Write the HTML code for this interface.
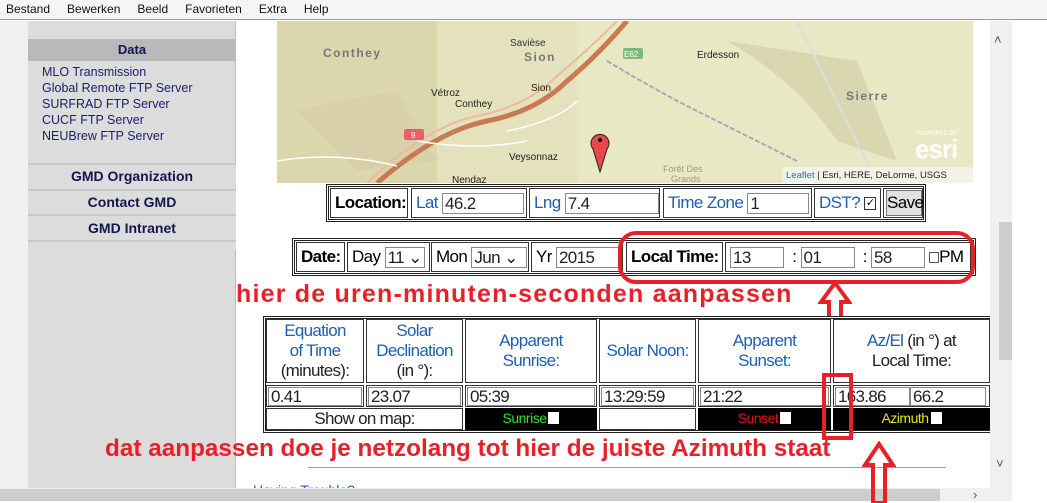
<!DOCTYPE html>
<html><head><meta charset="utf-8"><style>
*{margin:0;padding:0;box-sizing:border-box}
body{width:1047px;height:501px;overflow:hidden;background:#fff;font-family:"Liberation Sans",Arial,sans-serif;position:relative}
.a{position:absolute}
.menu span{margin-right:17px}
.side a{display:block;color:#1c1c6e;font-size:12.5px;line-height:16px}
.btn{position:absolute;left:28px;width:208px;background:#dcdcdc;border-top:2px solid #c8c8c8;text-align:center;font-weight:bold;font-size:14px;color:#141450}
.box{position:absolute;border:3px double #222;background:#fff}
.c{position:absolute;border:1px solid #333;font-size:17px;letter-spacing:-0.6px;white-space:nowrap;display:flex;align-items:center;padding-left:4px}
.in{display:inline-block;border:1px solid #888;height:21px;background:#fff;padding-left:2px;line-height:20px;color:#222}
.blue{color:#1f5fb0}
.red{color:#e8202a;font-weight:bold;font-size:25px;white-space:nowrap}
.th{position:absolute;border:1px solid #333;font-size:17px;letter-spacing:-0.7px;line-height:20px;color:#1f5fb0;display:flex;align-items:center;justify-content:center}
.th div{text-align:center}
.td{position:absolute;border:1px solid #333;font-size:17px;letter-spacing:-0.7px}
.blk{position:absolute;background:#000;font-size:14px;text-align:center;line-height:21px;letter-spacing:-0.5px}
.cb{display:inline-block;width:11px;height:12px;background:#fff;vertical-align:-1px;margin-left:2px}
.k{color:#222}
</style></head><body>
<div class="a menu" style="left:0;top:0;width:1047px;height:20px;background:#f5f5f5;border-bottom:1px solid #9a9a9a;font-size:12px;line-height:19px;padding-left:6px;color:#111"><span>Bestand</span><span>Bewerken</span><span>Beeld</span><span>Favorieten</span><span>Extra</span><span>Help</span></div>
<div class="a" style="left:0;top:21px;width:28px;height:467px;background:#f0f0f0"></div>
<div class="a" style="left:28px;top:21px;width:208px;height:467px;background:#dcdcdc;border-right:1px solid #bbb"></div>
<div class="a" style="left:28px;top:39px;width:208px;height:22px;background:#b9b9b9;text-align:center;font-weight:bold;font-size:13px;line-height:21px;color:#141450">Data</div>
<div class="a side" style="left:42px;top:64px"><a>MLO Transmission</a><a>Global Remote FTP Server</a><a>SURFRAD FTP Server</a><a>CUCF FTP Server</a><a>NEUBrew FTP Server</a></div>
<div class="btn" style="top:163px;height:25px;line-height:23px">GMD Organization</div>
<div class="btn" style="top:189px;height:25px;line-height:23px">Contact GMD</div>
<div class="btn" style="top:214px;height:26px;line-height:25px">GMD Intranet</div>
<div class="btn" style="top:240px;height:10px"></div>
<svg class="a" style="left:277px;top:21px" width="696" height="162" viewBox="0 0 696 162">
<rect width="696" height="162" fill="#e4e2bc"/>
<rect x="0" y="0" width="160" height="162" fill="#dcd6ad"/>
<rect x="300" y="0" width="396" height="162" fill="#e8e9c4"/>
<path d="M20 90 Q60 80 120 70 L160 140 L80 150 Z" fill="#d7d0a8"/>
<path d="M450 20 Q520 60 560 120 L620 140 L580 40Z" fill="#d8d7b0"/>
<path d="M520 0 Q560 80 600 162" stroke="#ddd" stroke-width="2" fill="none"/>
<path d="M330 40 Q380 70 420 90 T520 140" stroke="#a9a9b5" stroke-width="2" stroke-dasharray="5 2" fill="none"/>
<path d="M100 162 Q160 110 210 100 Q260 90 290 60 Q320 35 350 0" stroke="#c97a55" stroke-width="5" fill="none"/>
<path d="M90 162 Q150 105 200 95 Q250 85 280 55 Q310 30 340 0" stroke="#f0b7a0" stroke-width="2" fill="none"/>
<path d="M0 140 Q60 130 120 145 M140 120 Q200 130 250 120 M230 110 Q280 100 300 80" stroke="#fff" stroke-width="1.5" fill="none"/>
<text x="46" y="36" font-size="12" fill="#777" font-weight="bold" letter-spacing="1.5" font-family="Liberation Sans">Conthey</text>
<text x="233" y="25" font-size="10" fill="#333" font-family="Liberation Sans">Savièse</text>
<text x="247" y="40" font-size="12" fill="#777" font-weight="bold" letter-spacing="1.5" font-family="Liberation Sans">Sion</text>
<text x="254" y="70" font-size="10" fill="#222" font-family="Liberation Sans">Sion</text>
<text x="154" y="75" font-size="10" fill="#222" font-family="Liberation Sans">Vétroz</text>
<text x="178" y="86" font-size="10" fill="#222" font-family="Liberation Sans">Conthey</text>
<text x="232" y="139" font-size="10" fill="#222" font-family="Liberation Sans">Veysonnaz</text>
<text x="420" y="37" font-size="10" fill="#222" font-family="Liberation Sans">Erdesson</text>
<text x="569" y="79" font-size="12" fill="#777" font-weight="bold" letter-spacing="1.5" font-family="Liberation Sans">Sierre</text>
<text x="175" y="162" font-size="10" fill="#222" font-family="Liberation Sans">Nendaz</text>
<text x="386" y="151" font-size="9" fill="#9a9a7a" font-family="Liberation Sans">Forêt Des</text>
<text x="394" y="161" font-size="9" fill="#9a9a7a" font-family="Liberation Sans">Grands</text>
<rect x="127" y="108" width="20" height="11" rx="2" fill="#e8606a"/><text x="134" y="117" font-size="8" fill="#fff" font-family="Liberation Sans">9</text>
<rect x="346" y="27" width="20" height="11" rx="2" fill="#7bbb78"/><text x="347" y="36" font-size="8" fill="#fff" font-family="Liberation Sans">E62</text>
<path d="M323 151 L316 128 A9 9 0 1 1 330 128 Z" fill="#e8484a" stroke="#222" stroke-width="1"/>
<circle cx="323" cy="119" r="2" fill="#000"/>
<text x="640" y="114" font-size="6" fill="#fff" font-family="Liberation Sans">POWERED BY</text>
<text x="638" y="137" font-size="26" fill="#fff" font-weight="bold" font-family="Liberation Sans" letter-spacing="-1">esri</text>
<rect x="505" y="146" width="191" height="16" fill="#f2f2ea"/>
<text x="509" y="157" font-size="9.5" fill="#222" font-family="Liberation Sans"><tspan fill="#1a73b8">Leaflet</tspan> | Esri, HERE, DeLorme, USGS</text>
</svg>
<div class="box" style="left:326px;top:184px;width:600px;height:38px"></div>
<div class="c" style="left:330px;top:188px;width:78px;height:30px;font-weight:bold">Location:</div>
<div class="c" style="left:411px;top:188px;width:116px;height:30px"><span class="blue">Lat</span>&nbsp;<span class="in" style="width:82px">46.2</span></div>
<div class="c" style="left:529px;top:188px;width:131px;height:30px"><span class="blue">Lng</span>&nbsp;<span class="in" style="width:97px">7.4</span></div>
<div class="c" style="left:663px;top:188px;width:149px;height:30px"><span class="blue">Time Zone</span>&nbsp;<span class="in" style="width:62px">1</span></div>
<div class="c" style="left:814px;top:188px;width:67px;height:30px"><span class="blue">DST?</span>&nbsp;<span style="border:1px solid #333;width:12px;height:13px;font-size:11px;line-height:11px;text-align:center">✓</span></div>
<div class="c" style="left:883px;top:188px;width:40px;height:30px;padding-left:2px"><span style="background:#e1e1e1;border:1px solid #777;height:26px;width:36px;line-height:24px;text-align:center">Save</span></div>
<div class="box" style="left:292px;top:238px;width:684px;height:38px"></div>
<div class="c" style="left:296px;top:242px;width:49px;height:30px;font-weight:bold">Date:</div>
<div class="c" style="left:347px;top:242px;width:83px;height:30px">Day&nbsp;<span class="in" style="width:40px">11 ⌄</span></div>
<div class="c" style="left:431px;top:242px;width:98px;height:30px">Mon&nbsp;<span class="in" style="width:56px">Jun ⌄</span></div>
<div class="c" style="left:531px;top:242px;width:92px;height:30px">Yr&nbsp;<span class="in" style="width:64px">2015</span></div>
<div class="c" style="left:626px;top:242px;width:97px;height:30px;font-weight:bold">Local Time:</div>
<div class="c" style="left:725px;top:242px;width:246px;height:30px"><span class="in" style="width:54px">13</span>&nbsp;&nbsp;:&nbsp;<span class="in" style="width:54px">01</span>&nbsp;&nbsp;:&nbsp;<span class="in" style="width:54px">58</span>&nbsp;<span style="border:1px solid #555;width:10px;height:11px;display:inline-block"></span>PM</div>
<div class="a" style="left:618px;top:231px;width:357px;height:53px;border:4px solid #e8202a;border-radius:18px"></div>
<div class="a red" style="left:236px;top:280px;letter-spacing:1.2px">hier de uren-minuten-seconden aanpassen</div>
<svg class="a" style="left:818px;top:280px" width="34" height="52"><path d="M17 3 L31 22 L23 22 L23 49 L11 49 L11 22 L3 22 Z" fill="none" stroke="#e8202a" stroke-width="4"/></svg>
<div class="box" style="left:263px;top:316px;width:730px;height:117px"></div>
<div class="th" style="left:266px;top:319px;width:98px;height:64px"><div>Equation<br>of Time<br><span class="k">(minutes):</span></div></div>
<div class="th" style="left:366px;top:319px;width:97px;height:64px"><div>Solar<br>Declination<br><span class="k">(in °):</span></div></div>
<div class="th" style="left:465px;top:319px;width:132px;height:64px"><div>Apparent<br>Sunrise:</div></div>
<div class="th" style="left:599px;top:319px;width:97px;height:64px"><div>Solar Noon:</div></div>
<div class="th" style="left:698px;top:319px;width:133px;height:64px"><div>Apparent<br>Sunset:</div></div>
<div class="th" style="left:833px;top:319px;width:157px;height:64px"><div>Az/El <span class="k">(in °) at<br>Local Time:</span></div></div>
<div class="td" style="left:266px;top:385px;width:98px;height:22px"><span class="in" style="width:94px;margin:1px 0 0 1px;height:19px;line-height:18px">0.41</span></div>
<div class="td" style="left:366px;top:385px;width:97px;height:22px"><span class="in" style="width:93px;margin:1px 0 0 1px;height:19px;line-height:18px">23.07</span></div>
<div class="td" style="left:465px;top:385px;width:132px;height:22px"><span class="in" style="width:128px;margin:1px 0 0 1px;height:19px;line-height:18px">05:39</span></div>
<div class="td" style="left:599px;top:385px;width:97px;height:22px"><span class="in" style="width:93px;margin:1px 0 0 1px;height:19px;line-height:18px">13:29:59</span></div>
<div class="td" style="left:698px;top:385px;width:133px;height:22px"><span class="in" style="width:129px;margin:1px 0 0 1px;height:19px;line-height:18px">21:22</span></div>
<div class="td" style="left:833px;top:385px;width:157px;height:22px"><span class="in" style="width:75px;margin:1px 0 0 1px;height:19px;line-height:18px">163.86</span><span class="in" style="width:76px;height:19px;line-height:18px">66.2</span></div>
<div class="td" style="left:266px;top:408px;width:197px;height:22px;text-align:center;line-height:20px;color:#222">Show on map:</div>
<div class="blk" style="left:465px;top:408px;width:132px;height:22px;color:#2ee62e">Sunrise<span class="cb"></span></div>
<div class="td" style="left:599px;top:408px;width:97px;height:22px"></div>
<div class="blk" style="left:698px;top:408px;width:133px;height:22px;color:#f01010">Sunset<span class="cb"></span></div>
<div class="blk" style="left:833px;top:408px;width:157px;height:22px;color:#e8e810">Azimuth<span class="cb"></span></div>
<div class="a" style="left:822px;top:373px;width:31px;height:67px;border:4px solid #e8202a"></div>
<div class="a red" style="left:105px;top:435px;font-size:24.3px">dat aanpassen doe je netzolang tot hier de juiste Azimuth staat</div>
<div class="a" style="left:308px;top:467px;width:638px;height:1px;background:#9aa0a8"></div>
<div class="a" style="left:253px;top:482px;font-size:14px;color:#1f5fb0">Having Trouble?</div>
<svg class="a" style="left:862px;top:441px" width="34" height="62"><path d="M17 3 L31 24 L23 24 L23 62 L11 62 L11 24 L3 24 Z" fill="none" stroke="#e8202a" stroke-width="4"/></svg>
<div class="a" style="left:990px;top:21px;width:22px;height:467px;background:#f0f0f0"></div>
<div class="a" style="left:999px;top:222px;width:13px;height:138px;background:#cdcdcd"></div>
<div class="a" style="left:994px;top:32px;font-size:13px;color:#555">&#x2C4;</div>
<div class="a" style="left:996px;top:456px;font-size:13px;color:#555">&#x2C5;</div>
<div class="a" style="left:0;top:488px;width:1012px;height:13px;background:#f0f0f0"></div>
<div class="a" style="left:0;top:489px;width:940px;height:12px;background:#cdcdcd"></div>
<div class="a" style="left:973px;top:487px;font-size:13px;color:#555">›</div>
<svg class="a" style="left:862px;top:441px" width="34" height="62"><path d="M23 40 L23 62 M11 40 L11 62" stroke="#e8202a" stroke-width="4"/></svg>
</body></html>
